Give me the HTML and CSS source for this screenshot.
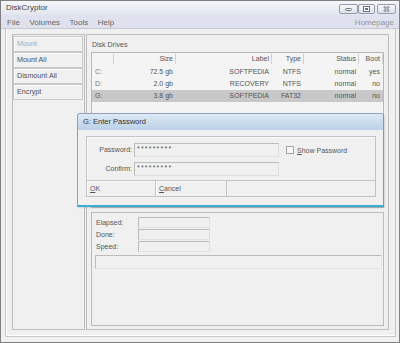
FILE: index.html
```html
<!DOCTYPE html>
<html>
<head>
<title>DiskCryptor</title>
<link rel="stylesheet" href="styles.css">
</head>
<body>

<div class="window">
  <div class="titlebar">
    <span class="title">DiskCryptor</span>
    <div class="cbtns">
      <span class="cbtn cbtn_min"><svg width="17" height="8" viewBox="0 0 17 8"><rect x="5.5" y="3.5" width="6" height="2" rx="1" fill="#fff" stroke="#66727f"/></svg></span>
      <span class="cbtn cbtn_max"><svg width="15" height="8" viewBox="0 0 15 8"><rect x="4.5" y="1.5" width="6" height="5" fill="#fff" stroke="#66727f"/><rect x="6" y="3" width="3" height="2" fill="#66727f"/></svg></span>
      <span class="cbtn cbtn_close"><svg width="17" height="8" viewBox="0 0 17 8"><path d="M6 1.5 L11 6.5 M11 1.5 L6 6.5" stroke="#66727f" stroke-width="2"/><path d="M6 1.5 L11 6.5 M11 1.5 L6 6.5" stroke="#fff" stroke-width="0.8"/></svg></span>
    </div>
  </div>
  <div class="menubar">
    <span>File</span><span>Volumes</span><span>Tools</span><span>Help</span>
    <span class="home">Homepage</span>
  </div>

  <div class="client">
    <div class="frame">
      <div class="sidebar">
        <div class="sbtn dis">Mount</div>
        <div class="sbtn">Mount All</div>
        <div class="sbtn">Dismount All</div>
        <div class="sbtn">Encrypt</div>
      </div>
      <div class="main">
        <div class="caption">Disk Drives</div>
        <div class="list">
          <div class="lrow lhdr"><div></div><div>Size</div><div>Label</div><div>Type</div><div>Status</div><div>Boot</div></div>
          <div class="lrow"><div>C:</div><div>72.5 gb</div><div>SOFTPEDIA</div><div>NTFS</div><div>normal</div><div>yes</div></div>
          <div class="lrow"><div>D:</div><div>2.0 gb</div><div>RECOVERY</div><div>NTFS</div><div>normal</div><div>no</div></div>
          <div class="lrow sel"><div>G:</div><div>3.8 gb</div><div>SOFTPEDIA</div><div>FAT32</div><div>normal</div><div>no</div></div>
        </div>
        <div class="prog">
          <div class="prow"><span>Elapsed:</span><div class="pbox"></div></div>
          <div class="prow"><span>Done:</span><div class="pbox"></div></div>
          <div class="prow"><span>Speed:</span><div class="pbox"></div></div>
          <div class="pbar"></div>
        </div>
      </div>
    </div>
  </div>

  <div class="dlg">
    <div class="dlg_ttl">G: Enter Password</div>
    <div class="dlg_body">
      <div class="dlg_grp">
        <div class="pw_grid">
          <label>Password:</label><div class="pw_inp">*********</div>
          <label>Confirm:</label><div class="pw_inp">*********</div>
        </div>
        <div class="chk"><span class="chk_box"></span><span><u>S</u>how Password</span></div>
      </div>
      <div class="dlg_btns">
        <div class="dbtn"><u>O</u>K</div>
        <div class="dbtn dbtn_w"><u>C</u>ancel</div>
      </div>
    </div>
  </div>
</div>

</body>
</html>
```

FILE: styles.css
```css
body {margin:0;font-family:"Liberation Sans", Arial, sans-serif;font-size:7px;color:#555;}

.window {position:relative;width:400px;height:343px;box-sizing:border-box;border:1px solid #808080;background:#f0f0f0;overflow:hidden;}

.titlebar {height:14px;display:flex;padding-left:5px;background:linear-gradient(#f4f6f9, #e2e6ee);font-size:8px;line-height:14px;color:#474747;}
.cbtns {margin-left:auto;margin-right:3px;margin-top:3px;display:flex;height:10px;}
.cbtn {box-sizing:border-box;height:10px;border:1px solid #939cab;border-radius:2px;background:linear-gradient(#f8f9fb, #dde2ea);display:flex;align-items:center;justify-content:center;}
.cbtn_min {width:19px;}
.cbtn_max {width:17px;}
.cbtn_close {width:19px;margin-left:2px;}

.menubar {height:11px;padding:2px 0 0 6px;display:flex;align-items:center;gap:9.5px;background:#dfe2ee;border-bottom:1px solid #c6c9d2;font-size:8px;color:#666;}
.menubar .home {margin-left:auto;margin-right:5px;color:#949494;}

.client {padding:0 3px 0 4px;}
.frame {display:flex;gap:1px;box-sizing:border-box;height:308px;padding:5px 6px 6px 6px;border:1px solid #c8c8c8;border-top:none;box-shadow:inset 1px -1px 0 #fff;}

.sidebar {width:73px;box-sizing:border-box;border:1px solid #bdbdbd;padding:1px 1px 0 0;}
.sbtn {height:16px;box-sizing:border-box;border:1px solid #c8c8c8;box-shadow:inset 1px 1px 0 #fbfbfb;padding-left:3px;line-height:14px;font-size:7.2px;color:#505050;}
.sbtn.dis {color:#acacac;}

.main {width:303px;box-sizing:border-box;border:1px solid #bdbdbd;padding:0 4px 3px 4px;display:flex;flex-direction:column;}
.caption {height:17px;line-height:17px;padding-left:1px;padding-top:1px;box-sizing:border-box;}

.list {height:156px;box-sizing:border-box;border:1px solid #b8b8b8;background:#f4f4f4;}
.lrow {display:grid;grid-template-columns:22px 62px 96px 32px 55px 24px;height:12px;line-height:12px;}
.lrow >div {text-align:right;padding-right:3px;white-space:nowrap;overflow:hidden;}
.lrow >div:first-child {text-align:left;padding-left:3px;padding-right:0;color:#777;}
.lhdr {margin-bottom:1px;}
.lhdr >div {border-right:1px solid #d0d0d0;padding-right:2px;height:10px;line-height:10px;margin-top:1px;}
.sel {background:#c8c8c8;}
.sel >div:first-child {color:#555;}

.prog {margin-top:4px;flex:1;border:1px solid #bbb;padding:4px 0 0 3px;}
.prow {display:flex;height:12px;}
.prow span {width:42px;margin-left:1px;line-height:11px;}
.pbox {width:72px;height:11px;box-sizing:border-box;border:1px solid #bababa;border-right-color:#e0e0e0;border-bottom-color:#e0e0e0;}
.pbar {margin-top:2px;width:287px;height:14px;box-sizing:border-box;border:1px solid #bcbcbc;border-right-color:#e4e4e4;border-bottom-color:#e4e4e4;}

.dlg {position:absolute;left:76px;top:112px;width:307px;height:94px;box-sizing:border-box;border:1px solid #90a2b8;border-right-color:#4aaed2;border-bottom:2px solid #36afd3;border-radius:3px 3px 0 0;background:#f0f0f0;box-shadow:1px 1px 2px rgba(0,0,0,0.12);}
.dlg_ttl {height:16px;line-height:16px;padding-left:5px;font-size:7.5px;color:#333;background:linear-gradient(#dde9f5, #bbd0e8);border-radius:2px 2px 0 0;}
.dlg_body {padding:6px 7px 0 8px;}
.dlg_grp {height:45px;box-sizing:border-box;border:1px solid #c2c2c2;box-shadow:inset 1px 1px 0 #fafafa;padding-top:6px;display:flex;}
.pw_grid {display:grid;grid-template-columns:45px 145px;column-gap:2px;}
.pw_grid label {text-align:right;line-height:14px;}
.pw_inp {height:14px;box-sizing:border-box;border:1px solid #bcbcbc;border-right-color:#dedede;border-bottom-color:#dedede;padding-left:2px;line-height:10px;letter-spacing:1.2px;}
.chk {display:flex;align-items:center;margin-left:7px;margin-top:3px;height:8px;gap:3px;}
.chk_box {width:8px;height:8px;box-sizing:border-box;border:1px solid #a4a4a4;background:#f7f7f7;}
.dlg_btns {height:16px;box-sizing:border-box;border:1px solid #c2c2c2;border-top:none;display:flex;}
.dbtn {width:69px;box-sizing:border-box;border-right:1px solid #c4c4c4;box-shadow:inset 1px 1px 0 #fbfbfb;padding-left:3px;line-height:15px;}
.dbtn_w {width:71px;}
```
